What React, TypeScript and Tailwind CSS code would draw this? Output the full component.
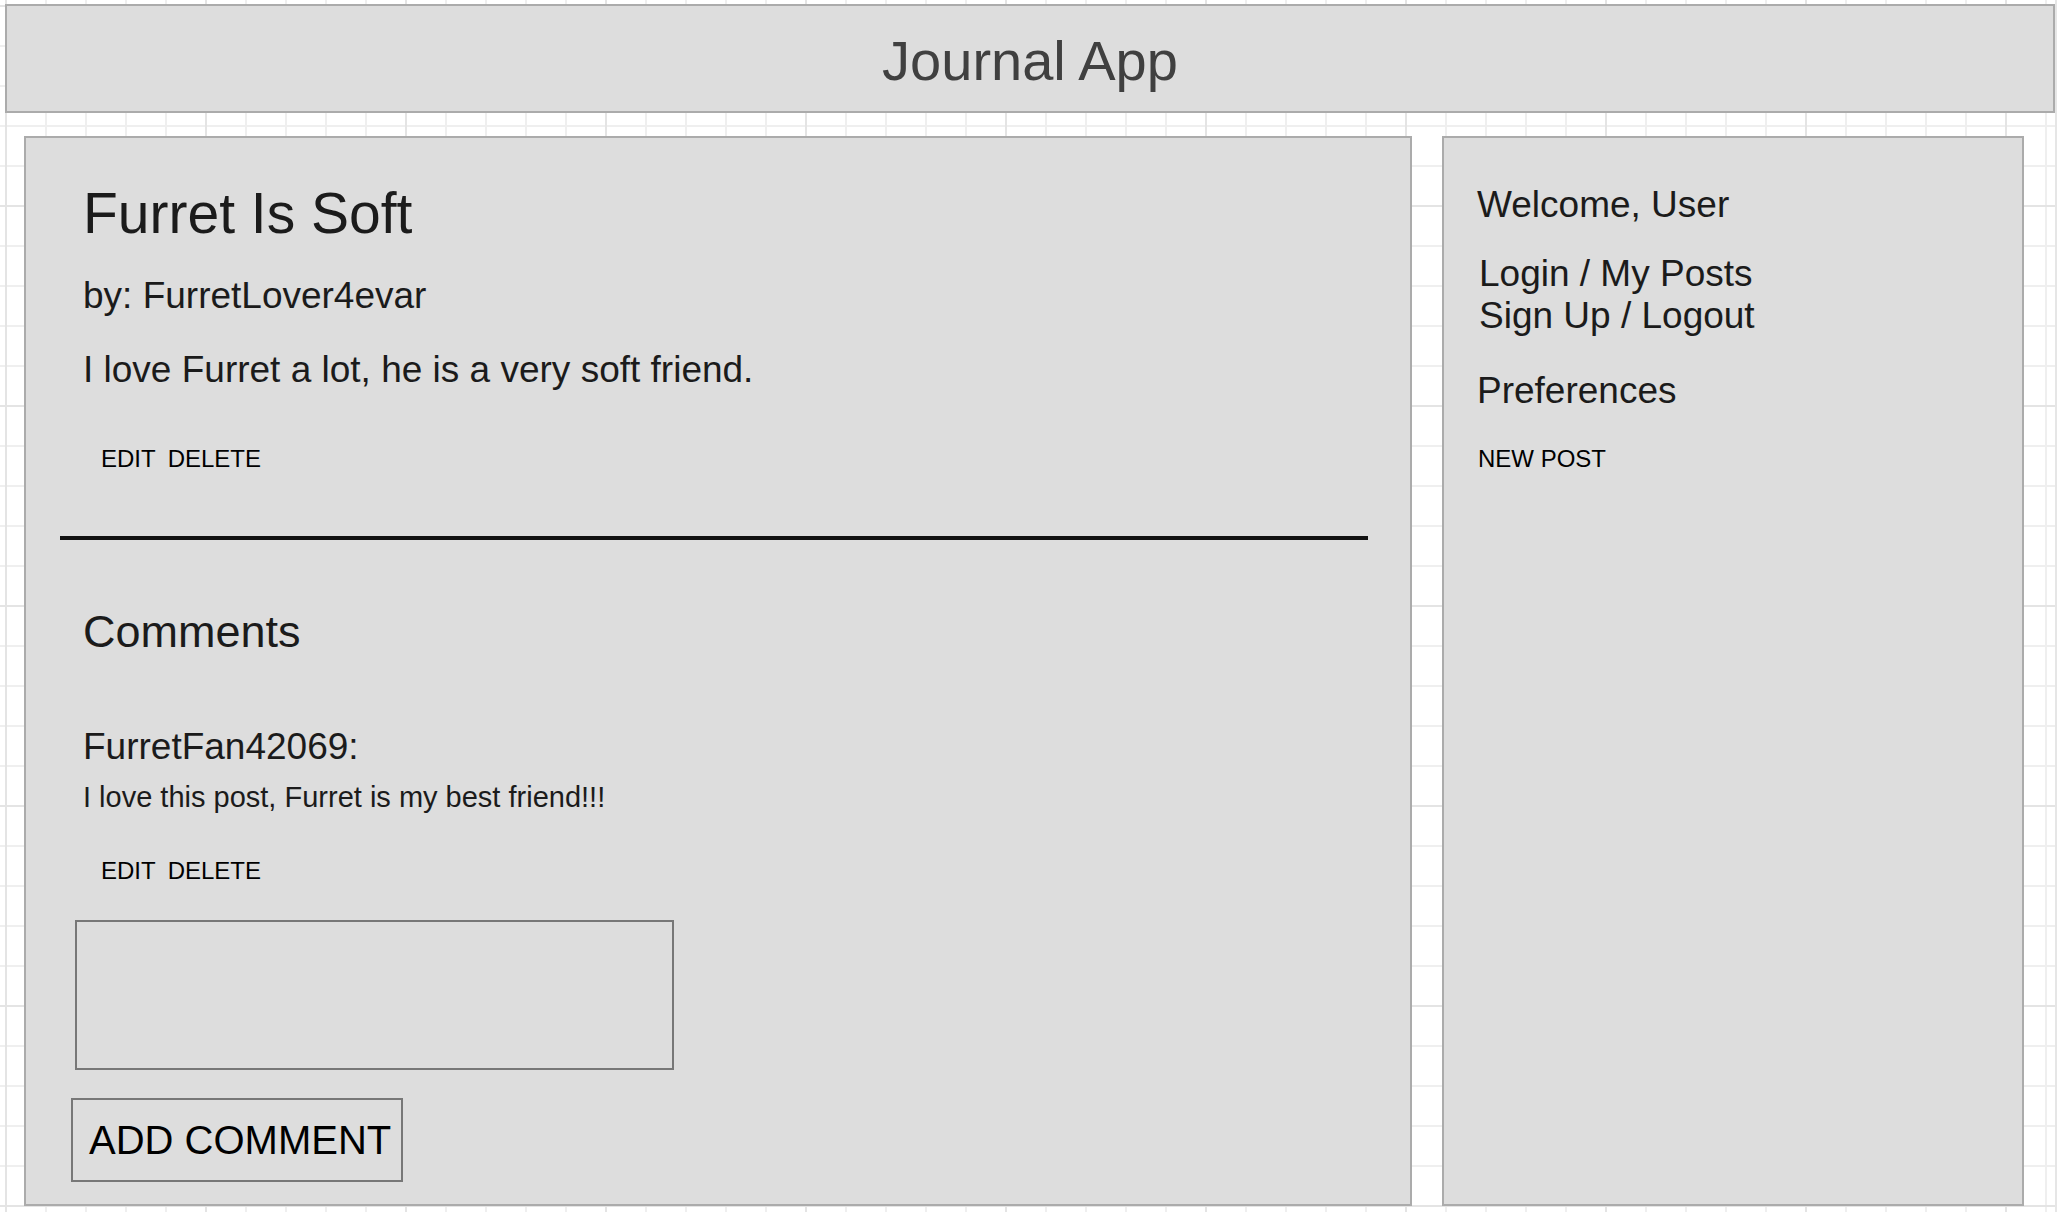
import React from "react";

function ActionRow({ className = "" }: { className?: string }) {
  return (
    <div className={"flex gap-[12px] text-[24px] leading-none text-black " + className}>
      <span>EDIT</span>
      <span>DELETE</span>
    </div>
  );
}

export default function App() {
  return (
    <div className="w-[2062px] h-[1212px] overflow-hidden bg-white font-['Liberation_Sans',Arial,sans-serif] text-[#1b1b1b]">
      <div className="h-full w-[2057px] border-r-2 border-[#e6e6e6] pt-[4px] pl-[5px] [background-image:linear-gradient(to_right,#e4e4e4_2px,transparent_2px),linear-gradient(to_bottom,#e4e4e4_2px,transparent_2px),linear-gradient(to_right,#efefef_2px,transparent_2px),linear-gradient(to_bottom,#efefef_2px,transparent_2px)] [background-size:200px_200px,200px_200px,40px_40px,40px_40px] [background-position:5px_5px]">
        <header className="w-[2050px] h-[109px] border-2 border-[#ababab] bg-[#dddddd] flex items-center justify-center pt-[4px]">
          <h1 className="text-[56px] leading-none text-[#404040]">Journal App</h1>
        </header>

        <div className="flex mt-[23px] ml-[19px] gap-[30px]">
          <main className="w-[1388px] h-[1070px] border-2 border-[#ababab] bg-[#dddddd] flex flex-col items-start">
            <h2 className="mt-[47px] ml-[57px] text-[57px] leading-none">Furret Is Soft</h2>
            <p className="mt-[35px] ml-[57px] text-[37px] leading-none">by: FurretLover4evar</p>
            <p className="mt-[37px] ml-[57px] text-[37px] leading-none">
              I love Furret a lot, he is a very soft friend.
            </p>
            <ActionRow className="mt-[59px] ml-[75px]" />

            <div className="mt-[65px] ml-[34px] w-[1308px] h-[4px] bg-[#111111]" />

            <h3 className="mt-[69px] ml-[57px] text-[45px] leading-none">Comments</h3>
            <p className="mt-[74px] ml-[57px] text-[37px] leading-none">FurretFan42069:</p>
            <p className="mt-[18px] ml-[57px] text-[29px] leading-none">
              I love this post, Furret is my best friend!!!
            </p>
            <ActionRow className="mt-[47px] ml-[75px]" />

            <div className="mt-[37px] ml-[49px] w-[599px] h-[150px] border-2 border-[#777777] bg-[#dddddd]" />

            <button className="mt-[28px] ml-[45px] w-[332px] h-[84px] border-2 border-[#777777] bg-[#dddddd] flex items-center pl-[16px] text-[40px] leading-none text-black">
              ADD COMMENT
            </button>
          </main>

          <aside className="w-[582px] h-[1070px] border-2 border-[#ababab] bg-[#dddddd] flex flex-col items-start">
            <p className="mt-[48px] ml-[33px] text-[37px] leading-none">Welcome, User</p>
            <div className="mt-[30px] ml-[35px] text-[37px] leading-[42px]">
              <div>Login / My Posts</div>
              <div>Sign Up / Logout</div>
            </div>
            <p className="mt-[35px] ml-[33px] text-[37px] leading-none">Preferences</p>
            <p className="mt-[38px] ml-[34px] text-[24px] leading-none text-black">NEW POST</p>
          </aside>
        </div>
      </div>
    </div>
  );
}
